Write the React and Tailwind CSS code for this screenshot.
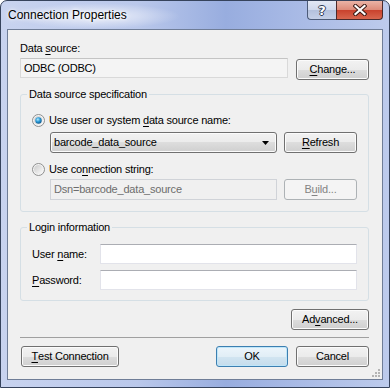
import clsx from "clsx";

const btnBase =
  "h-[21px] rounded-[3px] border text-[11px] leading-none flex items-center";

const normalFace =
  "border-[#707070] bg-[linear-gradient(to_bottom,#f2f2f2_0%,#ebebeb_50%,#dddddd_50%,#cfcfcf_100%)] text-black shadow-[inset_0_0_0_1px_#fbfbfb]";

function WinButton({ children, className, disabled, isDefault }) {
  return (
    <button
      type="button"
      disabled={disabled}
      className={clsx(
        btnBase,
        "justify-center",
        disabled
          ? "border-[#adb2b5] bg-[#f4f4f4] text-[#838383]"
          : isDefault
          ? "border-[#3c7fb1] bg-[linear-gradient(to_bottom,#ecf5fb_0%,#e1eef6_50%,#d2e5f1_50%,#c4dcec_100%)] text-black shadow-[inset_0_0_0_1px_#bfe6f9]"
          : normalFace,
        className
      )}
    >
      {children}
    </button>
  );
}

function U({ children }) {
  return <span className="underline underline-offset-[2px]">{children}</span>;
}

function Radio({ checked }) {
  return (
    <svg width="13" height="13" viewBox="0 0 13 13" className="shrink-0">
      <defs>
        <linearGradient id="rbg" x1="0" y1="0" x2="1" y2="1">
          <stop offset="0" stopColor="#cbcbcb" />
          <stop offset="1" stopColor="#fbfbfb" />
        </linearGradient>
        <radialGradient id="rdot" cx="0.4" cy="0.35" r="0.75">
          <stop offset="0" stopColor="#b4ecff" />
          <stop offset="0.45" stopColor="#2a9bd8" />
          <stop offset="1" stopColor="#0b4a7c" />
        </radialGradient>
      </defs>
      <circle cx="6.5" cy="6.5" r="6" fill="#f4f4f4" stroke="#8e8f8f" />
      <circle cx="6.5" cy="6.5" r="4.5" fill="url(#rbg)" />
      {checked && <circle cx="6.5" cy="6.5" r="3.2" fill="url(#rdot)" />}
    </svg>
  );
}

const inputCls =
  "h-[20px] border border-[#e2e3ea] border-t-[#abadb3] bg-white px-[3px] flex items-center";

function GroupBox({ title, className, children }) {
  return (
    <fieldset className={clsx("rounded-[3px] border border-[#d5dfe5]", className)}>
      <legend className="ml-[6px] px-[2px] leading-[14px]">{title}</legend>
      {children}
    </fieldset>
  );
}

export default function App() {
  return (
    <div className="w-[390px] h-[388px] font-['Liberation_Sans',Arial,sans-serif] text-[11px] tracking-[-0.2px] text-black">
      <div className="relative flex h-full flex-col rounded-t-[7px] border border-[#36435c] bg-[linear-gradient(to_right,#c8d3ef_0%,#bac8eb_35%,#98addf_58%,#a7b9e5_75%,#bdcbec_100%)] px-[6px] pb-[7px]">
        {/* glass highlight behind the title */}
        <div className="pointer-events-none absolute left-[10px] top-[2px] h-[26px] w-[170px] rounded-full bg-[radial-gradient(ellipse_at_center,rgba(255,255,255,0.75)_0%,rgba(255,255,255,0)_70%)]" />

        <div className="relative flex h-[28px] items-start">
          <div className="mt-[7px] ml-[1px] text-[12px] leading-[15px] tracking-normal [text-shadow:0_0_6px_#fff,0_0_3px_#fff]">
            Connection Properties
          </div>
          <div className="ml-auto flex">
            <div className="flex h-[19px] w-[29px] items-center justify-center rounded-bl-[4px] border border-t-0 border-r-0 border-[#4c5b78] bg-[linear-gradient(to_bottom,#e3e8f4_0%,#d0d9ed_50%,#b3c0dc_50%,#c5d0e8_100%)]">
              <span className="font-['DejaVu_Sans',sans-serif] text-[13px] font-bold leading-none tracking-normal text-white [text-shadow:1px_0_0_#2f3b55,-1px_0_0_#2f3b55,0_1px_0_#2f3b55,0_-1px_0_#2f3b55]">
                ?
              </span>
            </div>
            <div className="flex h-[19px] w-[47px] items-center justify-center rounded-br-[4px] border border-t-0 border-[#4c2a2a] bg-[linear-gradient(to_bottom,#eab3a6_0%,#dc8a78_50%,#c9412c_50%,#d8664e_100%)]">
              <svg width="14" height="12" viewBox="0 0 14 12">
                <path d="M2.5 2 L11.5 10 M11.5 2 L2.5 10" stroke="#3b1a14" strokeWidth="4.2" strokeLinecap="square" />
                <path d="M2.5 2 L11.5 10 M11.5 2 L2.5 10" stroke="#ffffff" strokeWidth="2.2" strokeLinecap="square" />
              </svg>
            </div>
          </div>
        </div>

        {/* client area */}
        <div className="relative flex flex-1 flex-col border border-[#6f7d97] bg-[#f0f0f0] pl-[12px] pr-[13px]">
          <div className="mt-[11px] h-[15px] leading-[15px]">
            Data <U>s</U>ource:
          </div>
          <div className="mt-[2px] flex items-start gap-[8px]">
            <div className="flex h-[20px] w-[268px] items-center border border-[#d9d9d9] border-t-[#c4c4c4] bg-[#f4f4f4] px-[3px]">
              ODBC (ODBC)
            </div>
            <WinButton className="mt-[1px] w-[73px]">
              <U>C</U>hange...
            </WinButton>
          </div>

          <GroupBox title="Data source specification" className="mt-[7px]">
            <div className="px-[11px] pb-[11px]">
              <div className="mt-[12px] flex h-[15px] items-center gap-[4px]">
                <Radio checked />
                <span className="leading-[15px]">
                  Use user or system <U>d</U>ata source name:
                </span>
              </div>
              <div className="ml-[18px] mt-[4px] flex gap-[7px]">
                <div className={clsx(btnBase, normalFace, "w-[227px] justify-between px-[3px]")}>
                  <span>barcode_data_source</span>
                  <svg width="7" height="4" viewBox="0 0 7 4" className="mr-[4px]">
                    <path d="M0 0 H7 L3.5 4 Z" fill="#000" />
                  </svg>
                </div>
                <WinButton className="w-[73px]">
                  <U>R</U>efresh
                </WinButton>
              </div>
              <div className="mt-[9px] flex h-[15px] items-center gap-[4px]">
                <Radio />
                <span className="leading-[15px]">
                  Use co<U>n</U>nection string:
                </span>
              </div>
              <div className="ml-[18px] mt-[2px] flex gap-[7px]">
                <div className="flex h-[21px] w-[227px] items-center border border-[#d0d3d8] bg-[#f0f0f0] px-[3px] text-[#6d6d6d]">
                  Dsn=barcode_data_source
                </div>
                <WinButton disabled className="w-[73px]">
                  B<U>u</U>ild...
                </WinButton>
              </div>
            </div>
          </GroupBox>

          <GroupBox title="Login information" className="mt-[8px]">
            <div className="px-[11px] pb-[10px]">
              <div className="mt-[10px] flex items-center">
                <span className="w-[68px]">
                  User <U>n</U>ame:
                </span>
                <div className={clsx(inputCls, "flex-1")} />
              </div>
              <div className="mt-[6px] flex items-center">
                <span className="w-[68px]">
                  <U>P</U>assword:
                </span>
                <div className={clsx(inputCls, "flex-1")} />
              </div>
            </div>
          </GroupBox>

          <div className="mt-[8px] flex justify-end">
            <WinButton className="w-[78px]">
              Ad<U>v</U>anced...
            </WinButton>
          </div>

          <div className="mt-[7px] h-px bg-[#a0a0a0]" />

          <div className="mt-[8px] flex gap-[8px]">
            <WinButton className="ml-[1px] w-[98px]">
              <U>T</U>est Connection
            </WinButton>
            <WinButton isDefault className="ml-auto w-[72px]">
              OK
            </WinButton>
            <WinButton className="w-[73px]">Cancel</WinButton>
          </div>

          {/* size grip */}
          <svg width="8" height="8" viewBox="0 0 8 8" className="absolute bottom-[2px] right-[2px]">
            {[
              [6, 0],
              [6, 3],
              [3, 3],
              [6, 6],
              [3, 6],
              [0, 6],
            ].map(([x, y]) => (
              <rect key={`${x}-${y}`} x={x} y={y} width="2" height="2" fill="#b4b4b4" />
            ))}
          </svg>
        </div>
      </div>
    </div>
  );
}
